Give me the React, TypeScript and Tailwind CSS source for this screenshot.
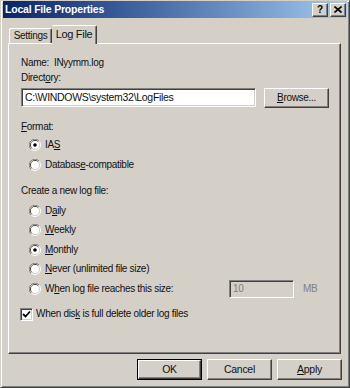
import { FC, ReactNode } from "react";

const font = { fontFamily: '"Liberation Sans", Arial, sans-serif' };

const Radio: FC<{ checked?: boolean }> = ({ checked }) => (
	<svg width="12" height="12" viewBox="0 0 12 12" className="shrink-0">
		<circle cx="6" cy="6" r="5.5" fill="none" stroke="#ffffff" />
		<path d="M1.9 10.1 A5.5 5.5 0 0 1 10.1 1.9" fill="none" stroke="#808080" />
		<circle cx="6" cy="6" r="4.5" fill="none" stroke="#d4d0c8" />
		<path d="M2.8 9.2 A4.5 4.5 0 0 1 9.2 2.8" fill="none" stroke="#404040" />
		<circle cx="6" cy="6" r="4" fill="#ffffff" />
		{checked && <circle cx="6" cy="6" r="1.8" fill="#000000" />}
	</svg>
);

const RadioRow: FC<{ checked?: boolean; mt: string; children: ReactNode }> = ({
	checked,
	mt,
	children,
}) => (
	<div className={`flex items-center h-[14px] pl-[8px] gap-[4px] ${mt}`}>
		<Radio checked={checked} />
		<span>{children}</span>
	</div>
);

const raised =
	"border border-t-white border-l-white border-r-[#404040] border-b-[#404040] shadow-[inset_-1px_-1px_0_#808080]";
const sunken =
	"border border-t-[#808080] border-l-[#808080] border-r-white border-b-white shadow-[inset_1px_1px_0_#404040,inset_-1px_-1px_0_#d4d0c8]";

const App: FC = () => {
	return (
		<div
			className="w-[350px] h-[388px] bg-[#d4d0c8] text-[#111] text-[10px] tracking-[-0.3px] leading-none flex flex-col border border-t-[#d4d0c8] border-l-[#d4d0c8] border-r-[#404040] border-b-[#404040] shadow-[inset_1px_1px_0_#fff,inset_-1px_-1px_0_#808080] px-[2px]"
			style={font}>
			{/* title bar */}
			<div className="h-[17px] flex items-center justify-between bg-gradient-to-r from-[#0a246a] to-[#a6caf0] pl-[2px] pr-[1px]">
				<span className="text-white font-bold text-[10.5px] tracking-[-0.2px]">
					Local File Properties
				</span>
				<div className="flex gap-[2px]">
					<div
						className={`w-[16px] h-[14px] bg-[#d4d0c8] flex items-center justify-center font-bold text-[10px] text-black ${raised}`}>
						?
					</div>
					<div
						className={`w-[16px] h-[14px] bg-[#d4d0c8] flex items-center justify-center ${raised}`}>
						<svg width="8" height="7" viewBox="0 0 8 7">
							<path
								d="M0.5 0.5 L7.5 6.5 M7.5 0.5 L0.5 6.5"
								stroke="#000"
								strokeWidth="1.6"
							/>
						</svg>
					</div>
				</div>
			</div>

			{/* tabs */}
			<div className="flex items-end ml-[5px] mt-[7px] h-[18px] relative z-10">
				<div className="w-[43px] h-[15px] ml-[1px] border-t border-l border-white border-r border-r-[#404040] rounded-t-[2px] flex items-center justify-center pb-[1px] shadow-[inset_-1px_0_0_#808080]">
					Settings
				</div>
				<div className="w-[45px] h-[19px] -mb-px bg-[#d4d0c8] border-t border-l-0 border-white border-r border-r-[#404040] rounded-t-[2px] flex items-center justify-center pb-[2px] text-[11px] shadow-[inset_-1px_0_0_#808080]">
					Log File
				</div>
			</div>

			{/* panel */}
			<div className="ml-[5px] w-[333px] h-[311px] border border-t-white border-l-white border-r-[#404040] border-b-[#404040] shadow-[inset_-1px_-1px_0_#808080] pl-[12px]">
				<div className="h-[14px] mt-[12px] flex items-center">
					Name:&nbsp;&nbsp;INyymm.log
				</div>
				<div className="h-[14px] mt-[1px] flex items-center">
					Direct<u>o</u>ry:
				</div>
				<div className="flex mt-[3px] gap-[8px] items-start">
					<div
						className={`w-[235px] h-[19px] bg-white flex items-center pl-[3px] text-[10.5px] ${sunken}`}>
						C:\WINDOWS\system32\LogFiles
					</div>
					<div
						className={`w-[65px] h-[20px] flex items-center justify-center ${raised}`}>
						<span>
							<u>B</u>rowse...
						</span>
					</div>
				</div>
				<div className="h-[14px] mt-[12px] flex items-center">
					<span>
						<u>F</u>ormat:
					</span>
				</div>
				<RadioRow checked mt="mt-[4px]">
					IA<u>S</u>
				</RadioRow>
				<RadioRow mt="mt-[6px]">
					Databas<u>e</u>-compatible
				</RadioRow>
				<div className="h-[14px] mt-[12px] flex items-center">
					Create a new log file:
				</div>
				<RadioRow mt="mt-[6px]">
					D<u>a</u>ily
				</RadioRow>
				<RadioRow mt="mt-[5px]">
					<u>W</u>eekly
				</RadioRow>
				<RadioRow checked mt="mt-[6px]">
					<u>M</u>onthly
				</RadioRow>
				<RadioRow mt="mt-[5px]">
					<u>N</u>ever (unlimited file size)
				</RadioRow>
				<div className="flex items-center h-[20px] mt-[3px]">
					<div className="flex items-center gap-[4px] pl-[8px] w-[208px]">
						<Radio />
						<span>
							W<u>h</u>en log file reaches this size:
						</span>
					</div>
					<div
						className={`w-[65px] h-[18px] flex items-center pl-[3px] text-[#808080] ${sunken}`}>
						10
					</div>
					<span className="ml-[9px] text-[#808080]">MB</span>
				</div>
				<div className="flex items-center h-[14px] mt-[8px] gap-[3px] -ml-[1px]">
					<div
						className={`w-[13px] h-[13px] bg-white flex items-center justify-center ${sunken}`}>
						<svg width="9" height="9" viewBox="0 0 9 9">
							<path
								d="M1 4 L3.5 6.5 L8 1.5"
								fill="none"
								stroke="#000"
								strokeWidth="1.8"
							/>
						</svg>
					</div>
					<span>
						When dis<u>k</u> is full delete older log files
					</span>
				</div>
			</div>

			{/* buttons */}
			<div className="flex justify-end gap-[5px] mt-[5px] pr-[5px]">
				<div className="w-[65px] h-[21px] border border-black">
					<div
						className={`w-full h-full flex items-center justify-center text-[10.5px] ${raised}`}>
						OK
					</div>
				</div>
				<div
					className={`w-[65px] h-[21px] flex items-center justify-center text-[10.5px] ${raised}`}>
					Cancel
				</div>
				<div
					className={`w-[65px] h-[21px] flex items-center justify-center text-[10.5px] ${raised}`}>
					<span>
						<u>A</u>pply
					</span>
				</div>
			</div>
		</div>
	);
};

export default App;
